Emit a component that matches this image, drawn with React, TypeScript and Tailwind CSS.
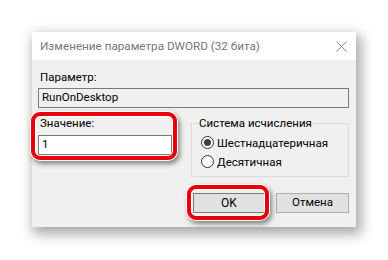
import React from 'react'

const font = { fontFamily: 'Roboto, "Noto Sans", sans-serif' }

function RedRing({ className }: { className: string }) {
  return (
    <div
      className={
        'pointer-events-none absolute rounded-[9px] border-[4px] border-[#e8000b] shadow-[0_0_0_1px_#ffffff,inset_0_0_0_1px_#ffffff,2px_3px_5px_1px_rgba(0,0,0,0.45)] ' +
        className
      }
    />
  )
}

function Radio({ checked, label }: { checked?: boolean; label: string }) {
  return (
    <div className="flex h-[19px] items-center gap-[3px]">
      <span className="flex h-[13px] w-[13px] items-center justify-center rounded-full border border-[#333333] bg-white">
        {checked && <span className="h-[7px] w-[7px] rounded-full bg-[#4b3a3a]" />}
      </span>
      <span className="text-[11.5px] leading-[16px] text-black">{label}</span>
    </div>
  )
}

export default function App() {
  return (
    <div className="h-[260px] w-[388px] overflow-hidden bg-white pt-[32px] pl-[32px]" style={font}>
      <div className="flex h-[195px] w-[324px] flex-col bg-[#f0f0f0] shadow-[3px_5px_12px_2px_rgba(0,0,0,0.35)]">
        {/* title bar */}
        <div className="flex h-[28px] items-center justify-between bg-white pl-[8px] pr-[7px]">
          <span className="text-[11.7px] leading-[16px] text-[#777777]">Изменение параметра DWORD (32 бита)</span>
          <svg width="11" height="11" viewBox="0 0 11 11" className="mr-[2px]">
            <path d="M0.5 0.5 L10.5 10.5 M10.5 0.5 L0.5 10.5" stroke="#8a8a8a" strokeWidth="1" fill="none" />
          </svg>
        </div>

        <div className="px-[6px] pt-[9px] text-[11.5px]">
          <div className="pl-[2px] leading-[16px] text-black">Параметр:</div>
          <div className="mt-[3px] flex h-[20px] w-[311px] items-center border border-[#7a7a7a] bg-[#f0f0f0] pl-[3px] text-black">
            RunOnDesktop
          </div>

          <div className="flex items-start">
            {/* value */}
            <div className="relative w-[134px]">
              <RedRing className="-left-[7px] -right-[5px] top-[4px] -bottom-[5px]" />
              <div className="mt-[7px] pl-[2px] leading-[16px] text-black">Значение:</div>
              <div className="mt-[4px] flex h-[20px] items-center border border-[#7a7a7a] bg-white pl-[3px] text-black">
                1
              </div>
            </div>

            {/* base */}
            <fieldset className="ml-[19px] mt-[7px] w-[158px] border border-[#dcdcdc] pb-[5px] pl-[9px]">
              <legend className="-ml-[3px] px-[1px] leading-[16px] text-black">Система исчисления</legend>
              <div className="mt-[2px]">
                <Radio checked label="Шестнадцатеричная" />
                <Radio label="Десятичная" />
              </div>
            </fieldset>
          </div>

          {/* buttons */}
          <div className="mt-[16px] flex justify-end gap-[11px] pr-[1px]">
            <div className="relative">
              <RedRing className="-left-[6px] -right-[4px] -top-[8px] -bottom-[7px]" />
              <button className="flex h-[20px] w-[72px] items-center justify-center border border-[#7a7a7a] bg-[#e1e1e1] text-[12px] text-black">
                OK
              </button>
            </div>
            <button className="flex h-[20px] w-[73px] items-center justify-center border border-[#adadad] bg-[#e1e1e1] text-[11.5px] text-black">
              Отмена
            </button>
          </div>
        </div>
      </div>
    </div>
  )
}
